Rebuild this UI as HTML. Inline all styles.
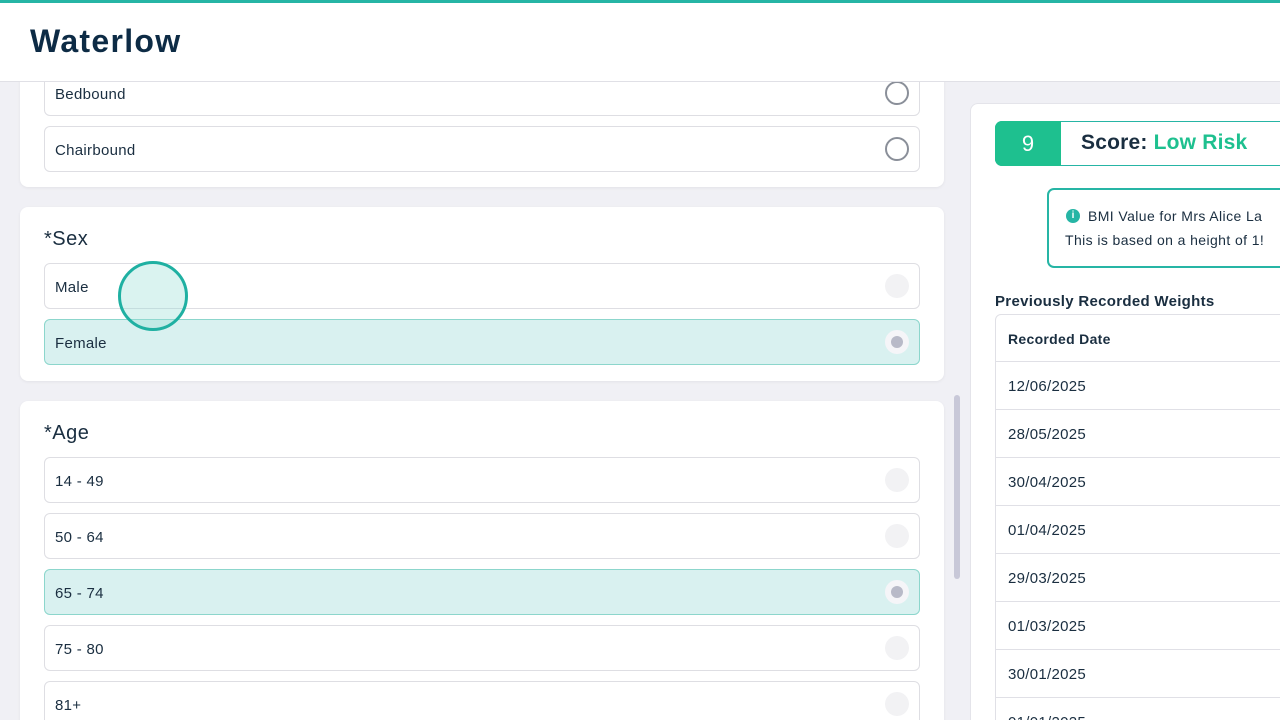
<!DOCTYPE html>
<html style="width:1280px;height:720px;overflow:hidden"><head><style>
*{box-sizing:border-box;margin:0;padding:0}
body{width:1280px;height:720px;overflow:hidden;background:#f0f0f5;font-family:"Liberation Sans",sans-serif;color:#1a2e40;position:relative}
.hdr{position:absolute;left:0;top:0;width:1280px;height:82px;background:#fff;border-top:3px solid #26b5a5;border-bottom:1px solid #e0e0e6;z-index:5}
.hdr h1{position:absolute;left:30px;top:20px;font-size:32px;font-weight:bold;color:#0d2b45;letter-spacing:1.3px}
.card{position:absolute;left:20px;width:924px;background:#fff;border-radius:8px;box-shadow:0 1px 3px rgba(0,0,0,0.06)}
.opt{position:absolute;left:24px;width:876px;height:46px;border:1px solid #dedee3;border-radius:6px;font-size:15px;padding-left:10px;line-height:47px;color:#1a2e40;letter-spacing:0.3px}
.opt.sel{background:#d9f1f0;border-color:#8cd6cc}
.rd{position:absolute;right:10px;top:10px;width:24px;height:24px;border-radius:50%;background:#f2f2f4}
.rd.o{background:#fff;border:2px solid #8a8f99;width:24px;height:24px}
.sel .rd{background:#f5f5f8}
.sel .rd::after{content:"";position:absolute;left:6px;top:6px;width:12px;height:12px;border-radius:50%;background:#b8bac8}
.ttl{position:absolute;left:24px;font-size:20px;color:#1a2e40;letter-spacing:0.5px}
.rc{position:absolute;left:970px;top:103px;width:330px;height:640px;background:#fff;border-radius:8px;border:1px solid #e4e4ea}
.row{position:absolute;left:995px;width:300px;height:48px;border:1px solid #e0e0e6;border-top:none;font-size:15px;padding-left:12px;line-height:49px;letter-spacing:0.3px}
</style></head><body>
<div class="hdr"><h1>Waterlow</h1></div>
<div class="card" style="top:60px;height:127px">
<div class="opt" style="top:10px">Bedbound<div class="rd o"></div></div>
<div class="opt" style="top:66px">Chairbound<div class="rd o"></div></div>
</div>
<div class="card" style="top:207px;height:174px">
<div class="ttl" style="top:21px">*Sex</div>
<div class="opt" style="top:56px">Male<div class="rd"></div></div>
<div class="opt sel" style="top:112px">Female<div class="rd"></div></div>
</div>
<div style="position:absolute;left:118px;top:261px;width:70px;height:70px;border-radius:50%;border:3px solid #1fb0a2;background:rgba(150,220,212,0.35);z-index:3"></div>
<div class="card" style="top:401px;height:340px">
<div class="ttl" style="top:21px">*Age</div>
<div class="opt" style="top:56px">14 - 49<div class="rd"></div></div>
<div class="opt" style="top:112px">50 - 64<div class="rd"></div></div>
<div class="opt sel" style="top:168px">65 - 74<div class="rd"></div></div>
<div class="opt" style="top:224px">75 - 80<div class="rd"></div></div>
<div class="opt" style="top:280px">81+<div class="rd"></div></div>
</div>
<div style="position:absolute;left:954px;top:395px;width:6px;height:184px;border-radius:3px;background:#c8c8d8"></div>
<div class="rc"></div>
<div style="position:absolute;left:995px;top:121px;width:300px;height:45px;border:1px solid #26b5a5;border-radius:7px 0 0 7px;background:#fff"></div>
<div style="position:absolute;left:995px;top:121px;width:66px;height:45px;background:#1ec08f;border-radius:7px 0 0 7px;color:#fff;font-size:22px;text-align:center;line-height:45px">9</div>
<div style="position:absolute;left:1081px;top:131px;font-size:21px;font-weight:bold;color:#1a2e40;letter-spacing:0.2px">Score: <span style="color:#1ec08f">Low Risk</span></div>
<div style="position:absolute;left:1047px;top:188px;width:260px;height:80px;border:2px solid #26b5a5;border-radius:7px;background:#fff"></div>
<div style="position:absolute;left:1066px;top:209px;width:14px;height:14px;border-radius:50%;background:#26b5a5;color:#fff;font-size:10px;font-weight:bold;text-align:center;line-height:14px">i</div>
<div style="position:absolute;left:1088px;top:208px;font-size:14px;white-space:nowrap;letter-spacing:0.4px">BMI Value for Mrs Alice La</div>
<div style="position:absolute;left:1065px;top:232px;font-size:14px;white-space:nowrap;letter-spacing:0.4px">This is based on a height of 1!</div>
<div style="position:absolute;left:995px;top:293px;font-size:15px;letter-spacing:0.3px;font-weight:bold;color:#1a2e40">Previously Recorded Weights</div>
<div class="row" style="top:314px;border-top:1px solid #e0e0e6;border-radius:6px 0 0 0;font-size:14px;font-weight:bold;color:#1a2e40">Recorded Date</div>
<div class="row" style="top:362px">12/06/2025</div>
<div class="row" style="top:410px">28/05/2025</div>
<div class="row" style="top:458px">30/04/2025</div>
<div class="row" style="top:506px">01/04/2025</div>
<div class="row" style="top:554px">29/03/2025</div>
<div class="row" style="top:602px">01/03/2025</div>
<div class="row" style="top:650px">30/01/2025</div>
<div class="row" style="top:698px">01/01/2025</div>
</body></html>
